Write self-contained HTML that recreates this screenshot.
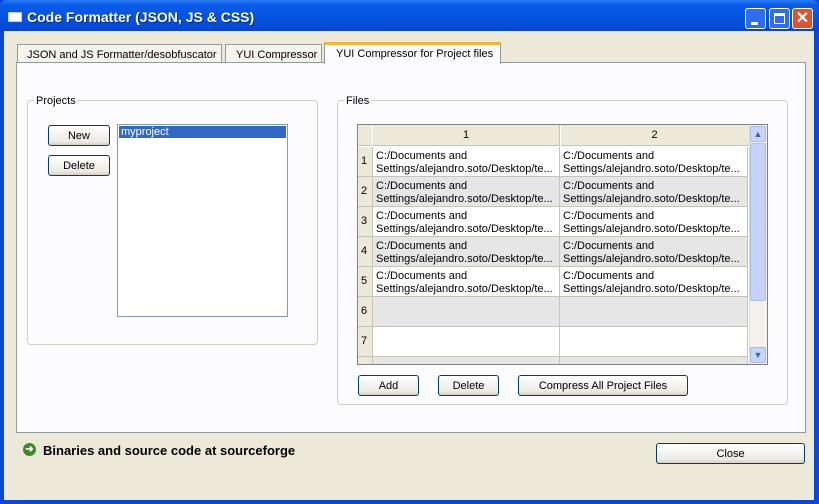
<!DOCTYPE html><html><head><style>
*{margin:0;padding:0;box-sizing:border-box}
body{width:819px;height:504px;overflow:hidden;background:#0a46d8;font-family:"Liberation Sans",sans-serif;font-size:11px;color:#000;position:relative}
.a{position:absolute}
.title{left:0;top:0;width:819px;height:32px;background:linear-gradient(#2a7cf4 0%,#0a5ce8 15%,#0452e0 60%,#0745d0 100%);border-radius:7px 7px 0 0}
.body{left:4px;top:31px;width:810px;height:469px;background:#ece9d8}
.btn{position:absolute;border:1px solid #003c74;border-radius:3px;background:linear-gradient(#fff,#ecebe6 80%,#d6d0c5);text-align:center;font-size:11px;line-height:21px}
.grp{position:absolute;border:1px solid #d0d0bf;border-radius:4px}
.lg{position:absolute;top:-6px;left:6px;background:#fcfcfe;padding:0 2px;color:#000}
.cell{position:absolute;font-size:11px;line-height:13px;padding:3px 0 0 3px;overflow:hidden;white-space:nowrap;border-right:1px solid #c6c3b8;border-bottom:1px solid #c6c3b8}
.rn{position:absolute;left:0;width:15px;background:#ece9d8;border-right:1px solid #c6c3b8;border-bottom:1px solid #c6c3b8;font-size:11px;padding-left:3px}
</style></head><body>
<div class="a title"></div>
<div class="a" style="left:8px;top:12px;width:14px;height:10px;background:#fff;border:1px solid #b8d0f8"></div>
<div class="a" style="left:27px;top:9px;color:#fff;font-weight:bold;font-size:14px;text-shadow:1px 1px #0a2a80">Code Formatter (JSON, JS &amp; CSS)</div>
<div class="a" style="left:745px;top:8px;width:21px;height:21px;border:1px solid #fff;border-radius:3px;background:#2e6cf0"><div class="a" style="left:5px;top:13px;width:7px;height:3px;background:#fff"></div></div>
<div class="a" style="left:769px;top:8px;width:21px;height:21px;border:1px solid #fff;border-radius:3px;background:#2e6cf0"><div class="a" style="left:4px;top:4px;width:11px;height:11px;border:1px solid #fff;border-top-width:3px"></div></div>
<div class="a" style="left:792px;top:8px;width:21px;height:21px;border:1px solid #fff;border-radius:3px;background:#e0522e;color:#fff;font-weight:bold;font-size:16px;line-height:19px;text-align:center">✕</div>
<div class="a body"></div>
<div class="a" style="left:17px;top:44px;width:205px;height:19px;background:#f4f3ee;border:1px solid #919b9c;border-bottom:none;padding:4px 0 0 9px">JSON and JS Formatter/desobfuscator</div>
<div class="a" style="left:225px;top:44px;width:97px;height:19px;background:#f4f3ee;border:1px solid #919b9c;border-bottom:none;padding:4px 0 0 10px">YUI Compressor</div>
<div class="a" style="left:16px;top:62px;width:790px;height:371px;background:#fcfcfe;border:1px solid #919b9c"></div>
<div class="a" style="left:324px;top:42px;width:177px;height:22px;background:#fcfcfe;border:1px solid #919b9c;border-top:3px solid #f7b337;border-bottom:none;padding:3px 0 0 11px">YUI Compressor for Project files</div>
<div class="grp" style="left:27px;top:100px;width:291px;height:245px"><span class="lg">Projects</span></div>
<div class="btn" style="left:48px;top:125px;width:62px;height:21px">New</div>
<div class="btn" style="left:48px;top:155px;width:62px;height:21px">Delete</div>
<div class="a" style="left:117px;top:124px;width:171px;height:193px;background:#fff;border:1px solid #7f9db9"><div style="margin:1px;background:#316ac5;color:#fff;height:12px;line-height:13px;padding-left:2px">myproject</div></div>
<div class="grp" style="left:337px;top:100px;width:451px;height:305px"><span class="lg">Files</span></div>
<div class="a" style="left:357px;top:124px;width:411px;height:241px;background:#fff;border:1px solid #808080;overflow:hidden">
<div class="a" style="left:0;top:0;width:391px;height:21px;background:#ece9d8;border-bottom:1px solid #c6c3b8"></div>
<div class="a" style="left:14px;top:0;width:188px;height:21px;border-left:1px solid #fff;border-right:1px solid #c6c3b8;text-align:center;line-height:21px">1</div>
<div class="a" style="left:202px;top:0;width:188px;height:21px;border-left:1px solid #fff;text-align:center;line-height:21px">2</div>
<div id="rows"></div>
<div class="a" style="left:391px;top:0;width:18px;height:240px;background:#f3f1ec;border-left:1px solid #e0ddd0"></div>
<div class="a" style="left:392px;top:1px;width:16px;height:16px;background:#c5d5fb;border:1px solid #a9bde6;border-radius:2px;text-align:center;font-size:9px;line-height:15px;color:#4d6185">▲</div>
<div class="a" style="left:392px;top:18px;width:16px;height:158px;background:#c3d3fd;border:1px solid #a9bde6;border-radius:2px"></div>
<div class="a" style="left:392px;top:222px;width:16px;height:16px;background:#c5d5fb;border:1px solid #a9bde6;border-radius:2px;text-align:center;font-size:9px;line-height:15px;color:#4d6185">▼</div>
</div>
<div class="btn" style="left:358px;top:375px;width:61px;height:21px">Add</div>
<div class="btn" style="left:438px;top:375px;width:61px;height:21px">Delete</div>
<div class="btn" style="left:518px;top:375px;width:170px;height:21px">Compress All Project Files</div>
<div class="a" style="left:23px;top:443px;width:13px;height:13px;border-radius:50%;background:#3d8a2a;color:#fff;font-size:10px;line-height:13px;text-align:center;font-weight:bold">➜</div>
<div class="a" style="left:43px;top:443px;font-weight:bold;font-size:13px">Binaries and source code at sourceforge</div>
<div class="btn" style="left:656px;top:443px;width:149px;height:21px">Close</div>
<script>
var h='',t=22;
for(var i=1;i<=8;i++){var bg=(i%2==0)?'#e6e6e6':'#fff';var txt=i<=5?'C:/Documents and<br>Settings/alejandro.soto/Desktop/te...':'';
h+='<div class="rn" style="top:'+t+'px;height:30px;line-height:29px">'+(i<8?i:'')+'</div>';
h+='<div class="cell" style="left:15px;top:'+t+'px;width:187px;height:30px;background:'+bg+'">'+txt+'</div>';
h+='<div class="cell" style="left:202px;top:'+t+'px;width:188px;height:30px;background:'+bg+'">'+txt+'</div>';
t+=30;}
document.getElementById('rows').innerHTML=h;
</script>
</body></html>
